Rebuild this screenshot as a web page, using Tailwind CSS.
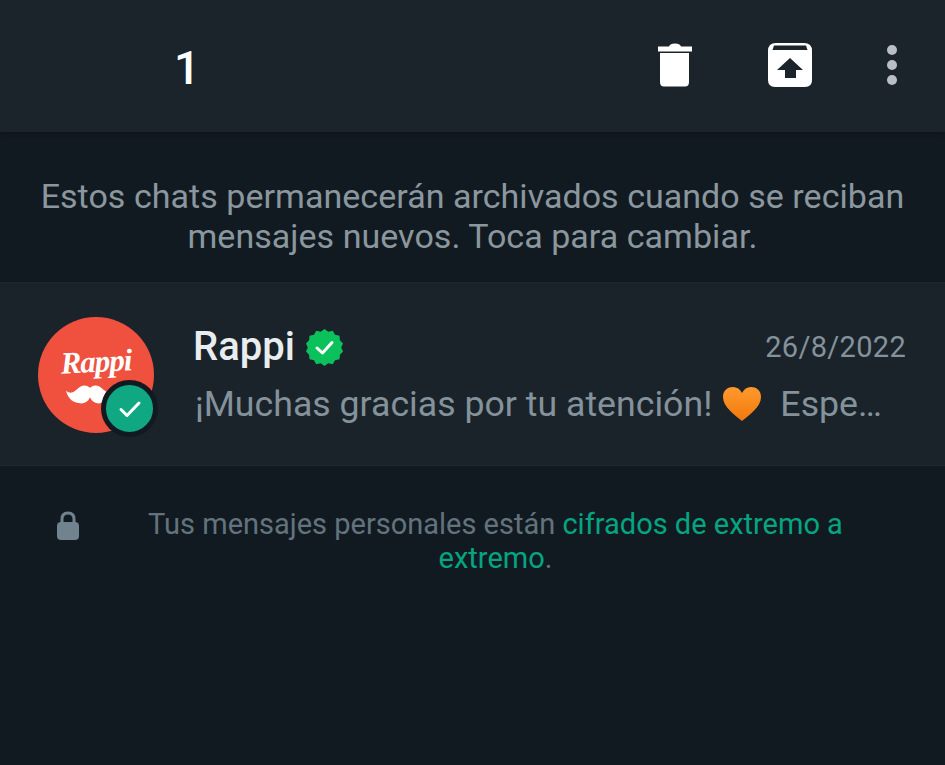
<!DOCTYPE html>
<html lang="es">
  <head>
    <meta charset="UTF-8" />
    <meta name="viewport" content="width=device-width, initial-scale=1.0" />
    <title>Archivados</title>
    <script src="https://cdn.jsdelivr.net/npm/@tailwindcss/browser@4"></script>
  </head>
  <body class="bg-[#121a21] font-['Roboto',sans-serif] w-[945px] h-[765px] overflow-hidden">
    <!-- selection toolbar -->
    <header class="h-[132px] bg-[#1b242b] flex items-center shadow-[0_2px_4px_rgba(0,0,0,0.25)]">
      <span class="ml-[174px] mt-[3px] text-[46px] leading-none font-medium text-white">1</span>
      <div class="ml-auto flex items-center mb-[2px]">
        <svg class="w-[34px] h-[44px] mr-[76px]" viewBox="0 0 34 44" fill="#fff">
          <path d="M0 3.500 H11 Q12 0.500 17 0.500 Q22 0.500 23 3.500 H34 V8.500 H0 Z" />
          <path d="M2 10 H31 V39 Q31 43.500 27 43.500 H6 Q2 43.500 2 39 Z" />
        </svg>
        <svg class="w-[44px] h-[44px] mr-[75px]" viewBox="0 0 44 44">
          <path fill="#fff" d="M8 0 H36 Q44 0 44 8 V37 Q44 44 37 44 H7 Q0 44 0 37 V8 Q0 0 8 0 Z" />
          <path fill="#1b242b" d="M6 2.500 H38 L39.500 7 H4.500 Z" />
          <path fill="#1b242b" d="M22 15 L35 27 H28 V35 H17 V27 H9 Z" />
        </svg>
        <div class="mr-[48px] flex flex-col gap-[5px]">
          <span class="w-[10px] h-[10px] rounded-full bg-[#b9bfc5]"></span>
          <span class="w-[10px] h-[10px] rounded-full bg-[#b9bfc5]"></span>
          <span class="w-[10px] h-[10px] rounded-full bg-[#b9bfc5]"></span>
        </div>
      </div>
    </header>

    <!-- archive settings notice -->
    <p class="h-[151px] pt-[44px] text-center text-[34px] leading-[40px] tracking-[0.04px] text-[#8b979e] border-b border-[#1d262d]">
      Estos chats permanecerán archivados cuando se reciban<br />mensajes nuevos. Toca para cambiar.
    </p>

    <!-- chat row -->
    <div class="h-[183px] bg-[#1a232a] flex border-b border-[#1f282f]">
      <div class="relative ml-[38px] mt-[34px] w-[116px] h-[116px] rounded-full bg-[#f0503e] shrink-0">
        <span class="absolute left-0 right-0 top-[29px] text-center font-['Liberation_Serif',serif] italic font-bold text-[31px] leading-none tracking-[-1px] text-white -rotate-3">Rappi</span>
        <svg class="absolute left-[28px] top-[67px] w-[48px] h-[20px]" viewBox="0 0 46 18" fill="#fff">
          <path d="M0 6 Q5 10 10 5 Q17 -2 23 3 Q29 -2 36 5 Q41 10 46 6 Q43 18 31 18 Q25 17 23 12 Q21 17 15 18 Q3 18 0 6 Z" />
        </svg>
        <div class="absolute left-[63px] top-[63px] w-[57px] h-[57px] rounded-full bg-[#0fa883] border-[5px] border-[#121a21] flex items-center justify-center">
          <svg class="w-[24px] h-[20px]" viewBox="0 0 24 20" fill="none" stroke="#fff" stroke-width="3" stroke-linecap="round" stroke-linejoin="round">
            <path d="M3 10.500 L9 16.500 L21 4" />
          </svg>
        </div>
      </div>
      <div class="ml-[39px] mr-[39px] flex-1 min-w-0 pt-[41px]">
        <div class="flex items-center h-[46px]">
          <span class="text-[40px] leading-none font-medium text-[#e9edef]">Rappi</span>
          <svg class="ml-[10px] w-[39px] h-[39px]" viewBox="0 0 39 39">
            <path fill="#0bc15c" d="M19.500 1 L23.300 3.700 L27.800 2.800 L30 6.800 L34.500 7.700 L34.900 12.300 L38 15.500 L36.200 19.500 L38 23.500 L34.900 26.700 L34.500 31.300 L30 32.200 L27.800 36.200 L23.300 35.300 L19.500 38 L15.700 35.300 L11.200 36.200 L9 32.200 L4.500 31.300 L4.100 26.700 L1 23.500 L2.800 19.500 L1 15.500 L4.100 12.300 L4.500 7.700 L9 6.800 L11.200 2.800 L15.700 3.700 Z" />
            <path fill="none" stroke="#fff" stroke-width="3" stroke-linecap="round" stroke-linejoin="round" d="M12 20 L17.500 25 L27 14.500" />
          </svg>
          <span class="ml-auto text-[29px] leading-none tracking-[0.3px] text-[#84929b]">26/8/2022</span>
        </div>
        <div class="flex items-center h-[44px] mt-[12px] pl-[2px] text-[35.700px] leading-none text-[#84929b] whitespace-nowrap">
          <span class="mt-[2px]">¡Muchas gracias por tu atención!</span>
          <svg class="ml-[10px] w-[40px] h-[36px]" viewBox="0 0 40 36">
            <defs>
              <linearGradient id="heart" x1="0" y1="0" x2="0" y2="1">
                <stop offset="0" stop-color="#ff9a2e" />
                <stop offset="1" stop-color="#f2780c" />
              </linearGradient>
            </defs>
            <path fill="url(#heart)" d="M20 35 C13 29 1 21 1 11 C1 4 6 1 11 1 C15 1 18 3 20 7 C22 3 25 1 29 1 C34 1 39 4 39 11 C39 21 27 29 20 35 Z" />
          </svg>
          <span class="ml-[18px] mt-[2px]">Espe…</span>
        </div>
      </div>
    </div>

    <!-- encryption note -->
    <div class="flex mt-[41px] pl-[57px] pr-[40px]">
      <svg class="w-[22px] h-[29px] mt-[4px] shrink-0" viewBox="0 0 22 29">
        <path fill="none" stroke="#71838e" stroke-width="3" d="M5 13 V8 Q5 2 11 2 Q17 2 17 8 V13" />
        <rect fill="#71838e" x="0" y="11" width="22" height="18" rx="4" />
      </svg>
      <p class="flex-1 pl-[7px] text-center text-[29px] leading-[34px] text-[#63737d]">
        Tus mensajes personales están <span class="text-[#05a582]">cifrados de extremo a</span><br /><span class="text-[#05a582]">extremo</span>.
      </p>
    </div>
  </body>
</html>
